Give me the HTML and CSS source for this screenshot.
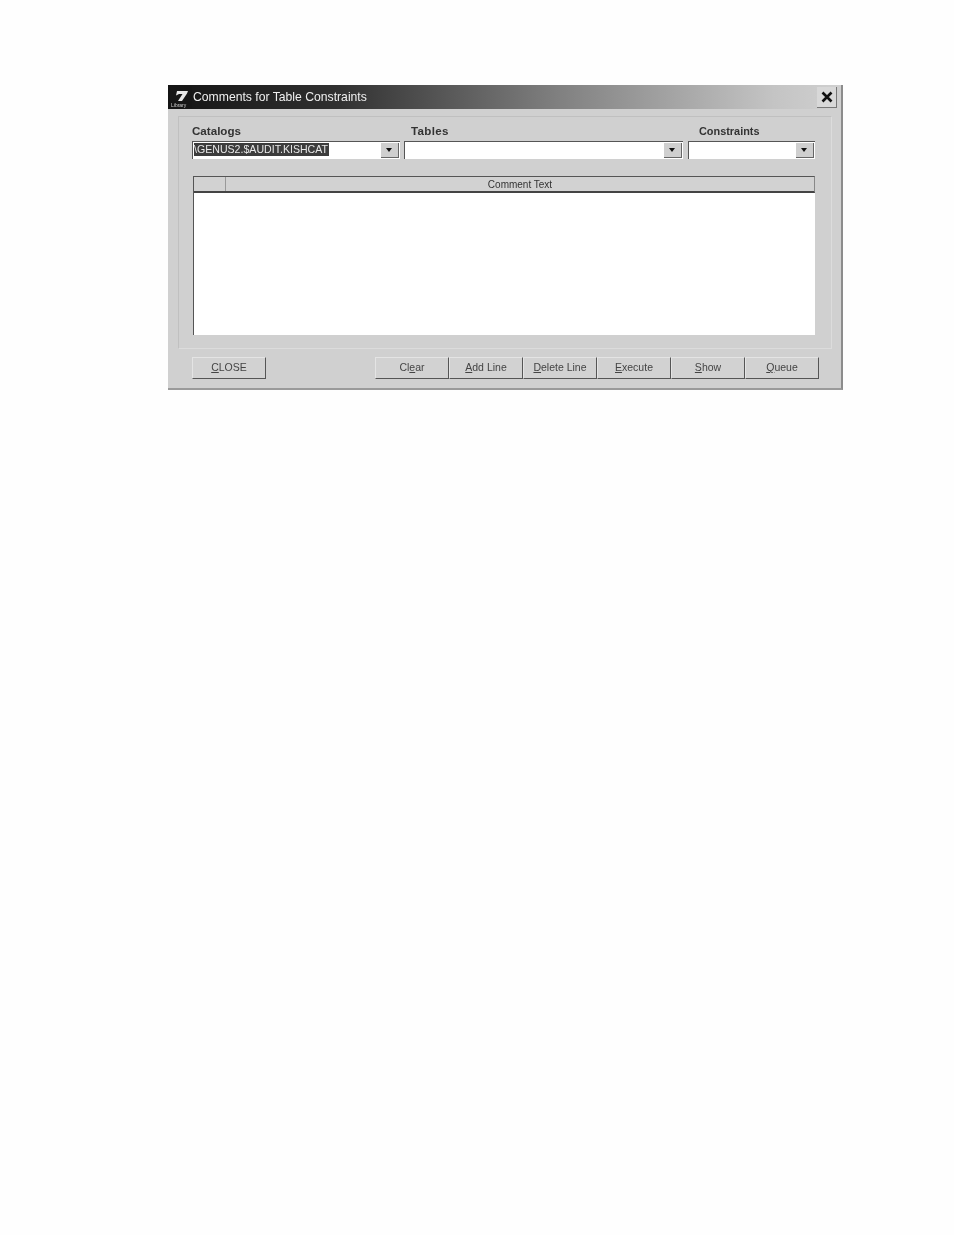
FILE: index.html
```html
<!DOCTYPE html>
<html lang="en">
<head>
<meta charset="utf-8">
<title>Comments for Table Constraints</title>
<link rel="stylesheet" href="styles.css">
</head>
<body>
<div class="window">
  <div class="titlebar">
    <svg class="logo" width="22" height="22" viewBox="0 0 22 22"><rect width="22" height="22" fill="#161616"/><path d="M7 5h11l-1 2.500-5 7.500H8l4.500-7H9l-3 1.500z" fill="#e8e8e8"/><text x="1" y="20.500" class="logo-text">Library</text></svg>
    <span class="title">Comments for Table Constraints</span>
    <span class="close-x"><svg width="14" height="14" viewBox="0 0 14 14"><path d="M2.500 2.500l9 9M11.500 2.500l-9 9" stroke="#111" stroke-width="2.600"/></svg></span>
  </div>
  <div class="panel">
    <div class="fields">
      <div class="field f-cat">
        <label class="lbl">Catalogs</label>
        <div class="combo"><span class="sel">\GENUS2.$AUDIT.KISHCAT</span><span class="arrow"></span></div>
      </div>
      <div class="field f-tab">
        <label class="lbl">Tables</label>
        <div class="combo"><span class="arrow"></span></div>
      </div>
      <div class="field f-con">
        <label class="lbl">Constraints</label>
        <div class="combo"><span class="arrow"></span></div>
      </div>
    </div>
    <div class="grid">
      <div class="grid-head"><span class="corner"></span><span class="col">Comment Text</span></div>
      <div class="grid-body"></div>
    </div>
  </div>
  <div class="buttons">
    <button class="btn btn-close"><u>C</u>LOSE</button>
    <div class="btn-group">
      <button class="btn">Cl<u>e</u>ar</button>
      <button class="btn"><u>A</u>dd Line</button>
      <button class="btn"><u>D</u>elete Line</button>
      <button class="btn"><u>E</u>xecute</button>
      <button class="btn"><u>S</u>how</button>
      <button class="btn"><u>Q</u>ueue</button>
    </div>
  </div>
</div>
</body>
</html>
```
FILE: styles.css
```css
html, body { margin: 0; padding: 0; background: #fefefe; }
body { height: 1235px; overflow: hidden; font-family: "Liberation Sans", Arial, sans-serif; }
.window {
  box-sizing: border-box;
  width: 675px; height: 305px;
  margin: 85px 0 0 168px;
  background: #d0d0d0;
  border-right: 2px solid #8c8c8c;
  border-bottom: 2px solid #9a9a9a;
  filter: blur(0.6px);
}
.titlebar {
  display: flex; align-items: center;
  height: 24px;
  padding-left: 2px;
  background: linear-gradient(90deg, #141414 0%, #303030 25%, #808080 58%, #c4c4c4 90%, #d0d0d0 100%);
}
.logo { flex: none; margin-right: 1px; }
.logo-text { font-size: 5px; fill: #ccc; font-family: "Liberation Sans", Arial, sans-serif; }
.title { color: #f0f0f0; font-size: 12.200px; }
.close-x {
  margin-left: auto; margin-right: 4px;
  display: flex; align-items: center; justify-content: center;
  width: 19px; height: 20px;
  background: #d8d8d8;
  border-right: 1px solid #777; border-bottom: 1px solid #777;
}
.panel {
  box-sizing: border-box;
  width: 654px; height: 233px;
  margin: 7px 0 0 10px;
  padding: 8px 16px 0 13px;
  border: 1px solid #dcdcdc;
  border-left-color: #c0c0c0; border-top-color: #c0c0c0;
}
.fields { display: flex; height: 51px; }
.field { display: flex; flex-direction: column; }
.f-cat { width: 208px; margin-right: 4px; }
.f-tab { width: 279px; margin-right: 5px; }
.f-con { width: 127px; }
.lbl { height: 16px; line-height: 11px; font-size: 11.600px; font-weight: bold; color: #333; }
.f-tab .lbl { padding-left: 7px; letter-spacing: 0.3px; }
.f-con .lbl { padding-left: 11px; font-size: 10.900px; line-height: 13px; }
.combo {
  box-sizing: border-box;
  display: flex; align-items: flex-start; justify-content: space-between;
  height: 18px;
  padding: 1px;
  background: #fff;
  border-top: 1px solid #555; border-left: 1px solid #555;
}
.sel { background: #3c3c3c; color: #e8e8e8; font-size: 10.600px; line-height: 13px; padding-right: 1px; }
.arrow {
  position: relative;
  margin-left: auto;
  width: 18px; height: 15px;
  background: #cfcfcf;
  border-right: 1px solid #666; border-bottom: 1px solid #666;
  box-sizing: border-box;
}
.arrow::after {
  content: ""; position: absolute; left: 5px; top: 5px;
  border: 3.500px solid transparent; border-top: 4px solid #111; border-bottom: 0;
}
.grid {
  box-sizing: border-box;
  width: 622px; height: 159px;
  margin: 0 0 0 1px;
  display: flex; flex-direction: column;
  border-left: 1px solid #555;
}
.grid-head {
  box-sizing: border-box;
  display: flex; height: 17px;
  border-top: 1px solid #555; border-bottom: 2px solid #444; border-right: 1px solid #888;
  background: #d2d2d2;
}
.corner { width: 31px; border-right: 1px solid #999; }
.col { flex: 1; text-align: center; font-size: 10px; line-height: 15px; color: #333; }
.grid-body { flex: 1; background: #fff; }
.buttons { display: flex; justify-content: space-between; margin: 8px 0 0 24px; width: 627px; }
.btn-group { display: flex; }
.btn {
  box-sizing: border-box;
  width: 74px; height: 22px;
  padding: 0 0 2px;
  background: #d2d2d2;
  border: 0;
  border-top: 1px solid #e4e4e4; border-left: 1px solid #e4e4e4;
  border-right: 1px solid #555; border-bottom: 1px solid #555;
  font-family: "Liberation Sans", Arial, sans-serif;
  font-size: 10.500px; color: #444;
}
```
